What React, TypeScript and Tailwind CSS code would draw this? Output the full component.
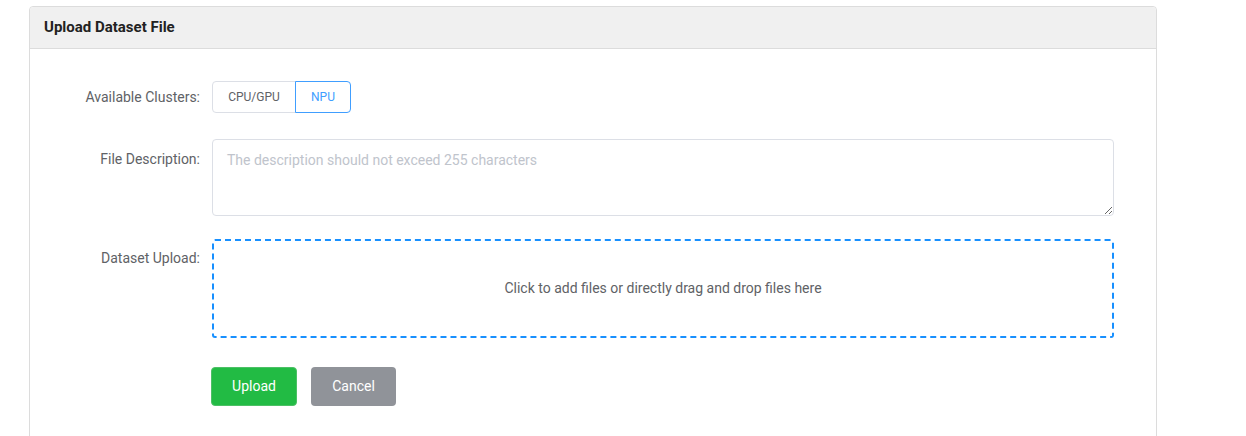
import React from "react";

export default function App() {
  return (
    <div className="w-[1246px] h-[436px] overflow-hidden bg-white" style={{ fontFamily: "Roboto, 'Noto Sans', sans-serif" }}>
      <div className="ml-[29px] mt-[6px] w-[1128px] h-[440px] border border-[#dcdcdc] rounded-t-[4px]">
        <div className="h-[42px] bg-[#f0f0f0] border-b border-[#dcdcdc] flex items-center pl-[14px] rounded-t-[4px]">
          <span className="text-[15px] font-bold text-[#222]">Upload Dataset File</span>
        </div>
        <div className="pt-[32px]">
          <div className="flex items-center h-[32px]">
            <div className="w-[182px] pr-[12px] text-right text-[14px] text-[#606266]">Available Clusters:</div>
            <div className="flex text-[12px]">
              <div className="h-[32px] w-[84px] flex items-center justify-center border border-[#dcdfe6] rounded-l-[4px] text-[#606266]">CPU/GPU</div>
              <div className="h-[32px] w-[56px] flex items-center justify-center border border-[#409eff] rounded-r-[4px] text-[#409eff] -ml-px">NPU</div>
            </div>
          </div>
          <div className="flex mt-[26px]">
            <div className="w-[182px] pr-[12px] text-right text-[14px] text-[#606266] pt-[10px] leading-[20px]">File Description:</div>
            <textarea
              className="w-[902px] h-[77px] border border-[#dcdfe6] rounded-[4px] px-[14px] py-[9px] text-[14px] leading-[22px] text-[#606266] placeholder:text-[#c0c4cc] outline-none resize-y"
              placeholder="The description should not exceed 255 characters"
            />
          </div>
          <div className="flex mt-[23px]">
            <div className="w-[182px] pr-[12px] text-right text-[14px] text-[#606266] pt-[9px] leading-[20px]">Dataset Upload:</div>
            <div className="w-[902px] h-[99px] border-2 border-dashed border-[#1890ff] rounded-[3px] flex items-center justify-center text-[14px] text-[#606266]">
              Click to add files or directly drag and drop files here
            </div>
          </div>
          <div className="flex mt-[29px] pl-[181px] gap-[14px]">
            <button className="w-[86px] h-[39px] bg-[#22bb44] border border-[#4cc065] rounded-[4px] text-white text-[14px]">Upload</button>
            <button className="w-[85px] h-[39px] bg-[#909399] rounded-[4px] text-white text-[14px]">Cancel</button>
          </div>
        </div>
      </div>
    </div>
  );
}
